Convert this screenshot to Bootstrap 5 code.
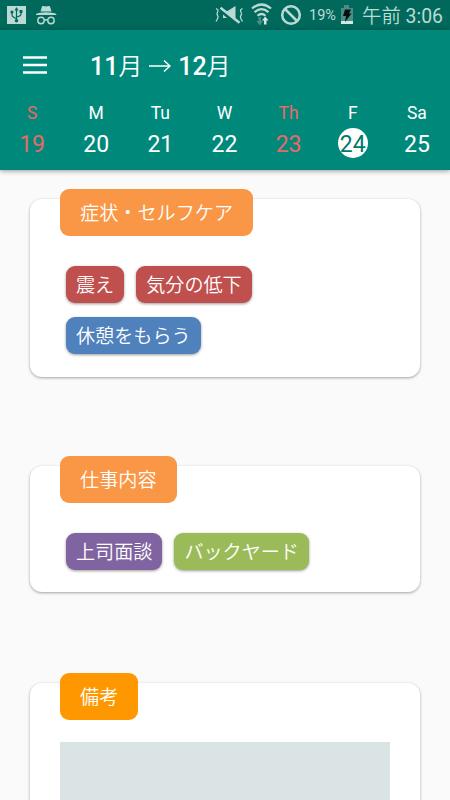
<!DOCTYPE html>
<html lang="ja">
<head>
<meta charset="utf-8">
<meta name="viewport" content="width=device-width, initial-scale=1">
<title>11月 → 12月</title>
<link href="https://cdn.jsdelivr.net/npm/bootstrap@5.3.0/dist/css/bootstrap.min.css" rel="stylesheet">
<style>
body{font-family:Roboto,"Noto Sans CJK JP",sans-serif;background:#fafafa;height:800px;overflow:hidden}
.status{height:30px;background:#00695c;color:#bcdad5;padding:0 7px 0 7px}
.status svg{display:block;flex:none}
.battery-pct{font-size:14.5px;margin-left:7px;width:28px;padding-top:2px}
.clock{font-size:19.4px;margin-left:8px;line-height:30px;padding-top:3px;white-space:nowrap}
.clock span{font-weight:350}
.appbar{height:140px;background:#00897b;color:#fff;box-shadow:0 1px 5px rgba(0,0,0,.4)}
.titlebar{height:70px;padding-left:23px}
.month{font-size:25px;font-weight:500;line-height:70px;margin-left:43px;padding-top:3px;white-space:nowrap}
.month span{font-size:23.8px;font-weight:350}
.arrow{margin:0 7px;position:relative;top:-1px}
.weekday{font-size:17.5px;line-height:24px;padding-top:1px}
.week{width:449px}
.daynum{font-size:23px;line-height:33px;width:30px;height:30px;margin-top:3px;white-space:nowrap}
.holiday{color:#e56a67}
.today{background:#fff;color:#00796b}
.panel{border-radius:12px;margin:0 30px;padding:0 30px;background:#fff;box-shadow:0 1px 3px rgba(0,0,0,.36)}
.heading{height:47px;border-radius:9px;padding:0 20px;margin-top:-10px;background:#f99746;color:#fff;font-size:19.15px;font-weight:350;line-height:50px;white-space:nowrap}
.heading-strong{background:#ff9800}
.chips{gap:14px 12px;padding:30px 6px 0}
.chip{height:37px;border-radius:9px;padding:0 10px;color:#fff;font-size:19.1px;font-weight:350;line-height:40px;white-space:nowrap;box-shadow:0 1px 3px rgba(0,0,0,.4)}
.red{background:#c0504d}.blue{background:#4f81bd}.purple{background:#8064a2}.green{background:#9bbb59}
.p-care{height:178px;margin-top:28.6px}
.p-work{height:126.3px;margin-top:89.500px}
.p-note{height:117px;margin-top:90.200px}
.note{height:80px;margin-top:22.500px;background:#dae4e5}
</style>
</head>
<body>
<div class="status d-flex align-items-center">
  <svg width="52" height="30" viewBox="0 0 52 30">
    <path fill="#bcdad5" d="M0 6h19v18H0z"/>
    <g fill="none" stroke="#00695c" stroke-width="1.2"><path d="M9.500 8v13M5 12v3q0 2 4.500 3.500M14 11v3q0 2-4.500 3"/></g>
    <path fill="#00695c" d="M7.500 10.500l2-3.500 2 3.500zM12.500 10h3v3h-3z"/><circle cx="5" cy="12" r="1.600" fill="#00695c"/><circle cx="9.500" cy="20.800" r="1.800" fill="#00695c"/>
    <path fill="#bcdad5" d="M33.500 11.500L35 6.500q.3-.6 1-.4l3 .5 3-.5q.7-.2 1 .4l1.500 5zM29 14q3-1.700 10-1.700T49.300 14v.9H29z"/>
    <g fill="none" stroke="#bcdad5" stroke-width="1.400"><circle cx="34" cy="20.500" r="3.200"/><circle cx="44" cy="20.500" r="3.200"/><path d="M37.200 20.500q1.800-1.600 3.600 0"/></g>
  </svg>
  <svg class="ms-auto" width="29" height="30" viewBox="0 0 29 30">
    <g fill="none" stroke="#bcdad5" stroke-width="1.300"><path d="M1 8.500q3 1.500 1.600 3.500T2.600 15.500 1 21.500M27.500 8.500q-3 1.500-1.600 3.500t0 3.500 1.600 6"/></g>
    <path fill="#bcdad5" d="M8 11h4.500L20.500 6v16.500l-8-4.500H8z"/><path d="M4.500 9.500L21 23.500" stroke="#00695c" stroke-width="3"/><path d="M5.500 7.800L24.500 22.800" stroke="#bcdad5" stroke-width="2.400"/>
  </svg>
  <svg width="28" height="30" viewBox="0 0 28 30" style="margin-left:4px">
    <g fill="none" stroke="#bcdad5" stroke-width="2.200"><path d="M4 8.500q9.500-8 19 0M6.500 12.200q7-6 14 0M9.500 15.800q4-3.600 8 0"/></g>
    <path fill="#498e85" d="M10.500 17h2.500v4h2l-3.200 4.500L8.500 21h2z"/><path fill="#d4e8e5" d="M16 24.500v-4h-2l3.200-4 3.300 4h-2v4z"/>
  </svg>
  <svg width="22" height="30" viewBox="0 0 22 30" style="margin-left:4px"><g fill="none" stroke="#bcdad5" stroke-width="2.500"><circle cx="11" cy="15" r="8.800"/><path d="M5 9l12 12"/></g></svg>
  <span class="battery-pct">19%</span>
  <svg width="14" height="30" viewBox="0 0 14 30" style="margin-left:3px"><path fill="#498e85" d="M4 5h5v3h4v16H1V8h3z"/><path fill="#d4e8e5" d="M1 21h12v3H1z"/><path fill="#07100f" d="M5 9.500h6l-2 4h2.500L5 22l1-6H3z"/></svg>
  <span class="clock"><span>午前</span> 3:06</span>
</div>
<header class="appbar">
  <div class="titlebar d-flex align-items-center">
    <svg width="24" height="18" viewBox="0 0 24 18"><path d="M0 1.500h24M0 9h24M0 16.500h24" stroke="#fff" stroke-width="2.500"/></svg>
    <div class="month d-flex align-items-center">11<span>月</span>
      <svg class="arrow" width="22" height="16" viewBox="0 0 22 16" fill="none" stroke="#fff" stroke-width="1.500"><path d="M0 8h21M15 2.500L21 8l-6 5.500"/></svg>
      12<span>月</span></div>
  </div>
  <div class="week row g-0 text-center">
    <div class="col"><div class="weekday holiday">S</div><div class="daynum mx-auto holiday">19</div></div>
    <div class="col"><div class="weekday">M</div><div class="daynum mx-auto">20</div></div>
    <div class="col"><div class="weekday">Tu</div><div class="daynum mx-auto">21</div></div>
    <div class="col"><div class="weekday">W</div><div class="daynum mx-auto">22</div></div>
    <div class="col"><div class="weekday holiday">Th</div><div class="daynum mx-auto holiday">23</div></div>
    <div class="col"><div class="weekday">F</div><div class="daynum mx-auto rounded-circle today">24</div></div>
    <div class="col"><div class="weekday">Sa</div><div class="daynum mx-auto">25</div></div>
  </div>
</header>
<main class="d-flex flex-column">
  <section class="panel p-care d-flex flex-column align-items-start">
    <div class="heading">症状・セルフケア</div>
    <div class="chips d-flex flex-wrap">
      <span class="chip red">震え</span><span class="chip red">気分の低下</span>
      <span class="chip blue">休憩をもらう</span>
    </div>
  </section>
  <section class="panel p-work d-flex flex-column align-items-start">
    <div class="heading">仕事内容</div>
    <div class="chips d-flex flex-wrap">
      <span class="chip purple">上司面談</span><span class="chip green">バックヤード</span>
    </div>
  </section>
  <section class="panel p-note d-flex flex-column align-items-start rounded-bottom-0">
    <div class="heading heading-strong">備考</div>
    <div class="note w-100 flex-shrink-1"></div>
  </section>
</main>
<script src="https://cdn.jsdelivr.net/npm/bootstrap@5.3.0/dist/js/bootstrap.bundle.min.js"></script>
</body>
</html>
